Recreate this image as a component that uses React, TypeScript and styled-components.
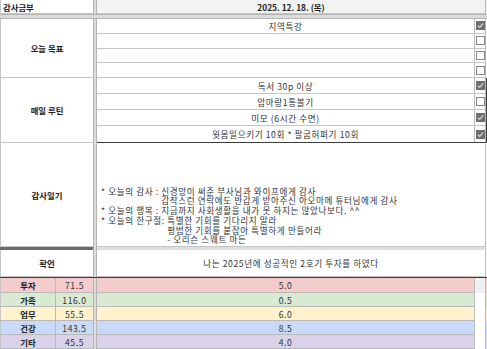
import styled, { createGlobalStyle } from 'styled-components'

const GlobalStyle = createGlobalStyle`
  html, body {
    margin: 0;
    padding: 0;
    background: #fff;
  }
  body {
    font-family: 'Noto Sans CJK KR', 'Noto Sans', sans-serif;
  }
`

const GRID = '#c6c6c6'

const goals = [
  { text: '지역특강', done: true, h: 15 },
  { text: '', done: false, h: 15 },
  { text: '', done: false, h: 15 },
  { text: '', done: false, h: 14 },
]

const routines = [
  { text: '독서 30p 이상', done: true },
  { text: '암마랑1통볼기', done: false },
  { text: '미모 (6시간 수면)', done: true },
  { text: '윗몸일으키기 10회 * 팔굽혀펴기 10회', done: true },
]

const diary = [
  { label: '* 오늘의 감사 : ', lines: ['신경망이 써준 부사님과 와이프에게 감사', '갑작스런 연락에도 반갑게 받아주신 아오마메 튜터님에게 감사'] },
  { label: '* 오늘의 행복 : ', lines: ['지금까지 사회생활을 내가 못 하지는 않았나보다. ^^'] },
  { label: '* 오늘의 한구절: ', lines: ['특별한 기회를 기다리지 말라', '평범한 기회를 붙잡아 특별하게 만들어라', '- 오리슨 스웨트 마든'] },
]

const scores = [
  { name: '투자', total: '71.5', today: '5.0', color: '#f4cccc' },
  { name: '가족', total: '116.0', today: '0.5', color: '#d9ead3' },
  { name: '업무', total: '55.5', today: '6.0', color: '#fff2cc' },
  { name: '건강', total: '143.5', today: '8.5', color: '#c9daf8' },
  { name: '기타', total: '45.5', today: '4.0', color: '#d9d2e9' },
]

const Sheet = styled.div`
  width: 487px;
  height: 349px;
  overflow: hidden;
  display: flex;
  flex-direction: column;
  font-size: 8.6px;
  letter-spacing: 0.6px;
  color: #333;
`

const Section = styled.div<{ $h: number }>`
  display: flex;
  height: ${(p) => p.$h}px;
  flex-shrink: 0;
`

const LeftCell = styled.div<{ $align?: string }>`
  width: 93px;
  box-sizing: border-box;
  border-left: 1px solid ${GRID};
  border-bottom: 1px solid ${GRID};
  display: flex;
  align-items: center;
  justify-content: ${(p) => p.$align || 'center'};
  padding-left: ${(p) => (p.$align ? '2px' : '0')};
  font-size: 8.4px;
  letter-spacing: 0;
  font-weight: 700;
  color: #222;
  background: #fff;
`

const VDivider = styled.div`
  width: 4px;
  box-sizing: border-box;
  background: #dcdcdc;
  border-left: 1px solid #b4b4b4;
  border-right: 1px solid #b4b4b4;
`

const RightCol = styled.div<{ $bg?: string; $dark?: boolean }>`
  flex: 1;
  display: flex;
  flex-direction: column;
  box-sizing: border-box;
  border-right: 1px solid #b9b9b9;
  background: ${(p) => p.$bg || '#fff'};
  border-bottom: 1px solid ${(p) => (p.$dark ? '#3c3c3c' : GRID)};
`

const Tail = styled.div<{ $bg?: string }>`
  width: 1px;
  background: ${(p) => p.$bg || '#fff'};
`

const DateCell = styled.div`
  flex: 1;
  display: flex;
  align-items: center;
  justify-content: center;
  font-size: 8.4px;
  letter-spacing: 0;
  font-weight: 700;
  color: #222;
`

const HBand = styled.div`
  height: 5px;
  flex-shrink: 0;
  box-sizing: border-box;
  background: #dcdcdc;
  border-top: 1px solid #b4b4b4;
  border-bottom: 1px solid #b4b4b4;
`

const TaskRow = styled.div<{ $h: number; $last?: boolean }>`
  display: flex;
  height: ${(p) => p.$h}px;
  box-sizing: border-box;
  border-bottom: ${(p) => (p.$last ? 'none' : `1px solid ${GRID}`)};
`

const TaskText = styled.div`
  flex: 1;
  display: flex;
  align-items: center;
  justify-content: center;
  white-space: nowrap;
`

const CheckCell = styled.div<{ $bg?: string }>`
  width: 11px;
  box-sizing: border-box;
  border-left: 1px solid #bdbdbd;
  display: flex;
  align-items: center;
  justify-content: center;
  background: ${(p) => p.$bg || 'transparent'};
`

const Box = styled.span<{ $checked: boolean }>`
  width: 9px;
  height: 9px;
  box-sizing: border-box;
  display: flex;
  align-items: center;
  justify-content: center;
  background: ${(p) => (p.$checked ? '#6e6e6e' : '#fff')};
  border: 1px solid ${(p) => (p.$checked ? '#6e6e6e' : '#858585')};
`

const DiaryBody = styled.div`
  flex: 1;
  display: flex;
  flex-direction: column;
  justify-content: flex-end;
  padding: 0 0 1px 4px;
  line-height: 9.7px;
`

const Entry = styled.div`
  display: flex;
`

const EntryLabel = styled.span`
  white-space: pre;
`

const EntryLines = styled.div`
  display: flex;
  flex-direction: column;
  white-space: nowrap;
`

const DarkBand = styled.div<{ $w?: number }>`
  width: ${(p) => (p.$w ? `${p.$w}px` : 'auto')};
  flex: ${(p) => (p.$w ? '0 0 auto' : '1')};
  background: #6a6a6a;
`

const LightBand = styled.div`
  flex: 1;
  background: #dedede;
`

const Affirm = styled.div`
  flex: 1;
  display: flex;
  align-items: center;
  justify-content: center;
`

const DarkLine = styled.div`
  height: 1px;
  flex-shrink: 0;
  background: #3a3a3a;
`

const ScoreRow = styled.div<{ $h: number }>`
  display: flex;
  height: ${(p) => p.$h}px;
  flex-shrink: 0;
`

const ScoreName = styled.div<{ $bg: string }>`
  width: 56px;
  box-sizing: border-box;
  border-left: 1px solid ${GRID};
  border-right: 1px solid #b9b9b9;
  border-bottom: 1px solid #b9b9b9;
  background: ${(p) => p.$bg};
  display: flex;
  align-items: center;
  justify-content: center;
  font-size: 8.4px;
  letter-spacing: 0;
  font-weight: 700;
  color: #222;
`

const ScoreTotal = styled.div<{ $bg: string }>`
  width: 37px;
  box-sizing: border-box;
  border-bottom: 1px solid #b9b9b9;
  background: ${(p) => p.$bg};
  display: flex;
  align-items: center;
  justify-content: center;
`

const ScoreRight = styled.div`
  flex: 1;
  display: flex;
  box-sizing: border-box;
  border-right: 1px solid #b9b9b9;
`

const ScoreBar = styled.div<{ $bg: string }>`
  flex: 1;
  box-sizing: border-box;
  background: ${(p) => p.$bg};
  border-bottom: 1px solid #b9b9b9;
  display: flex;
  align-items: center;
  justify-content: center;
`

function Check({ checked }: { checked: boolean }) {
  return (
    <Box $checked={checked}>
      {checked && (
        <svg width="7" height="7" viewBox="0 0 7 7">
          <polyline points="0.8,3.6 2.7,5.4 6.2,1.4" fill="none" stroke="#d8d8d8" strokeWidth="1.2" />
        </svg>
      )}
    </Box>
  )
}

export default function App() {
  return (
    <>
      <GlobalStyle />
      <Sheet>
        <Section $h={14}>
          <LeftCell $align="flex-start">감사금부</LeftCell>
          <VDivider />
          <RightCol $bg="#f3f3f3">
            <DateCell>2025. 12. 18. (목)</DateCell>
          </RightCol>
          <Tail $bg="#f3f3f3" />
        </Section>
        <HBand />

        <Section $h={59}>
          <LeftCell>오늘 목표</LeftCell>
          <VDivider />
          <RightCol>
            {goals.map((g, i) => (
              <TaskRow key={i} $h={g.h} $last={i === goals.length - 1}>
                <TaskText>{g.text}</TaskText>
                <CheckCell>
                  <Check checked={g.done} />
                </CheckCell>
              </TaskRow>
            ))}
          </RightCol>
          <Tail />
        </Section>

        <Section $h={65}>
          <LeftCell>매일 루틴</LeftCell>
          <VDivider />
          <RightCol $dark>
            {routines.map((r, i) => (
              <TaskRow key={i} $h={16} $last={i === routines.length - 1}>
                <TaskText>{r.text}</TaskText>
                <CheckCell>
                  <Check checked={r.done} />
                </CheckCell>
              </TaskRow>
            ))}
          </RightCol>
          <Tail $bg="#3c3c3c" />
        </Section>

        <Section $h={104}>
          <LeftCell>감사일기</LeftCell>
          <VDivider />
          <RightCol>
            <DiaryBody>
              {diary.map((d) => (
                <Entry key={d.label}>
                  <EntryLabel>{d.label}</EntryLabel>
                  <EntryLines>
                    {d.lines.map((l) => (
                      <span key={l}>{l}</span>
                    ))}
                  </EntryLines>
                </Entry>
              ))}
            </DiaryBody>
          </RightCol>
          <Tail />
        </Section>

        <Section $h={3}>
          <DarkBand $w={93} />
          <VDivider />
          <LightBand />
        </Section>

        <Section $h={27}>
          <LeftCell>확언</LeftCell>
          <VDivider />
          <RightCol>
            <Affirm>나는 2025년에 성공적인 2호기 투자를 하였다</Affirm>
          </RightCol>
          <Tail />
        </Section>
        <DarkLine />

        {scores.map((s, i) => (
          <ScoreRow key={s.name} $h={i === 0 ? 15 : 14}>
            <ScoreName $bg={s.color}>{s.name}</ScoreName>
            <ScoreTotal $bg={s.color}>{s.total}</ScoreTotal>
            <VDivider />
            <ScoreRight>
              <ScoreBar $bg={s.color}>{s.today}</ScoreBar>
              <CheckCell $bg={i === 0 ? '#efefef' : '#fff'} />
            </ScoreRight>
            <Tail $bg={s.color} />
          </ScoreRow>
        ))}
      </Sheet>
    </>
  )
}
